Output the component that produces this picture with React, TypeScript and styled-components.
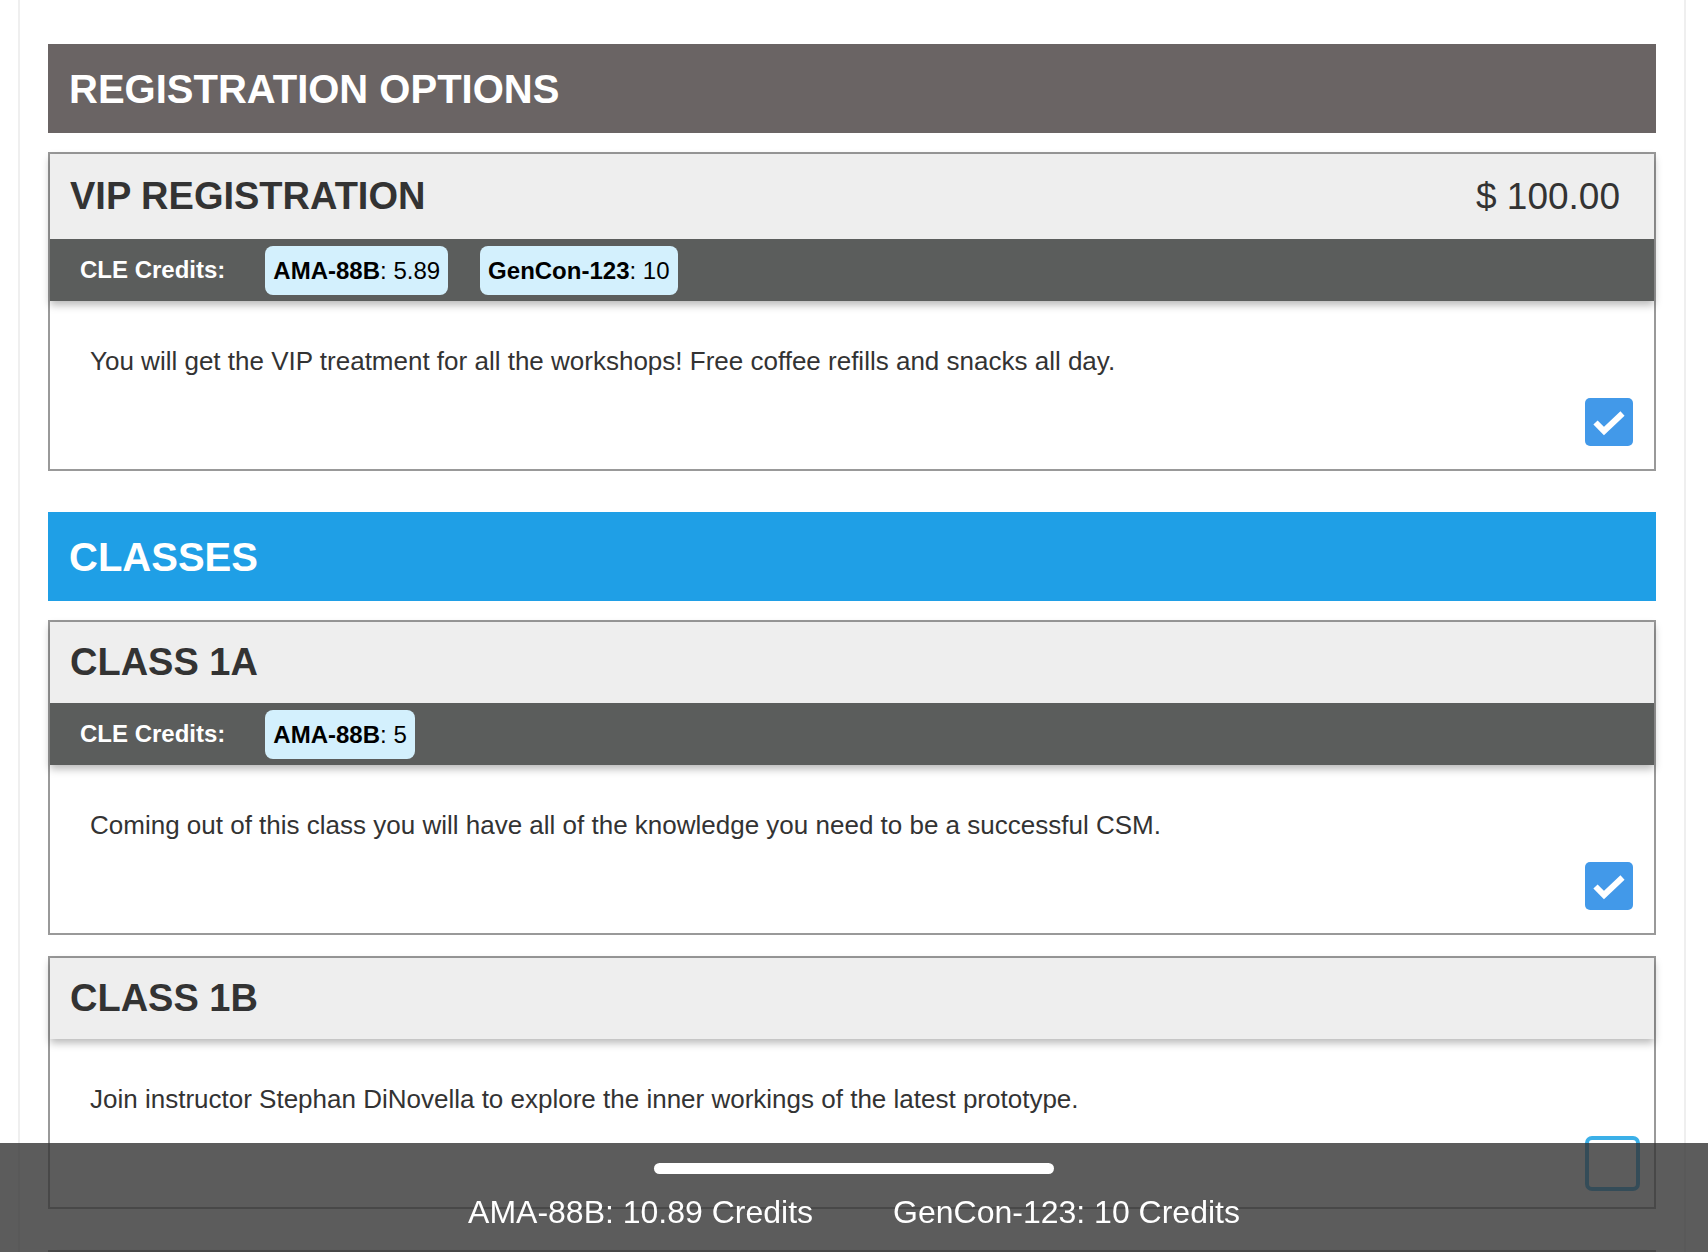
import React from "react";
import styled, { createGlobalStyle } from "styled-components";

const GlobalStyle = createGlobalStyle`
  html, body {
    margin: 0;
    padding: 0;
    background: #ffffff;
  }
  body {
    font-family: "Liberation Sans", Arial, Helvetica, sans-serif;
    color: #333333;
  }
  *, *::before, *::after {
    box-sizing: border-box;
  }
`;

const Page = styled.main`
  margin-left: 18px;
  width: 1668px;
  min-height: 1500px;
  border-left: 2px solid #efefef;
  border-right: 2px solid #efefef;
  padding: 44px 28px 200px;
`;

const Section = styled.section`
  & + & {
    margin-top: 41px;
  }
`;

const SectionHeader = styled.h2<{ $tone: "gray" | "blue" }>`
  margin: 0 0 19px;
  height: 89px;
  display: flex;
  align-items: center;
  padding: 0 21px;
  background: ${(p) => (p.$tone === "blue" ? "#1f9fe6" : "#6a6464")};
  color: #ffffff;
  font-size: 40px;
  font-weight: 700;
  line-height: 1;
`;

const Card = styled.article`
  border: 2px solid #999999;
  background: #ffffff;
  & + & {
    margin-top: 21px;
  }
`;

const CardTop = styled.div`
  position: relative;
  z-index: 1;
  box-shadow: 0 4px 8px rgba(0, 0, 0, 0.28);
`;

const CardHeader = styled.header`
  display: flex;
  align-items: center;
  justify-content: space-between;
  background: #eeeeee;
  padding: 18px 34px 18px 20px;
`;

const CardTitle = styled.h3`
  margin: 0;
  font-size: 38px;
  line-height: 45px;
  font-weight: 700;
  color: #333333;
`;

const Price = styled.span`
  font-size: 37px;
  line-height: 49px;
  color: #333333;
`;

const CreditsBar = styled.div`
  height: 62px;
  display: flex;
  align-items: center;
  gap: 32px;
  padding-left: 30px;
  background: #5b5d5c;
`;

const CreditsLabel = styled.span`
  color: #ffffff;
  font-size: 24px;
  font-weight: 700;
  margin-right: 8px;
`;

const Chip = styled.span`
  background: #d3f0fd;
  color: #000000;
  border-radius: 8px;
  padding: 8px 8px;
  font-size: 24px;
  line-height: 33px;
  white-space: nowrap;

  b {
    font-weight: 700;
  }
`;

const CardBody = styled.div`
  display: flex;
  flex-direction: column;
  padding: 42px 21px 23px 40px;
`;

const Description = styled.p`
  margin: 0;
  min-height: 36px;
  font-size: 26px;
  line-height: 36px;
  color: #333333;
`;

const CheckRow = styled.div`
  display: flex;
  justify-content: flex-end;
  margin-top: 19px;
`;

const CheckBox = styled.span<{ $checked: boolean }>`
  display: flex;
  align-items: center;
  justify-content: center;
  ${(p) =>
    p.$checked
      ? `
    width: 48px;
    height: 48px;
    border-radius: 5px;
    background: #4299e9;
  `
      : `
    width: 55px;
    height: 55px;
    margin-right: -7px;
    margin-bottom: -7px;
    border-radius: 7px;
    border: 4px solid #3bb0e8;
    background: #ffffff;
  `}
`;

const TotalsOverlay = styled.footer`
  position: fixed;
  left: 0;
  right: 0;
  bottom: 0;
  height: 109px;
  z-index: 10;
  display: flex;
  flex-direction: column;
  align-items: center;
  padding-top: 20px;
  background: rgba(51, 51, 51, 0.8);
`;

const Handle = styled.div`
  width: 400px;
  height: 11px;
  border-radius: 6px;
  background: #ffffff;
`;

const TotalsRow = styled.div`
  display: flex;
  gap: 80px;
  margin-top: 19px;
`;

const Total = styled.span`
  color: #ffffff;
  font-size: 32px;
  line-height: 1.2;
  white-space: nowrap;
`;

type Credit = { code: string; value: string };

type Option = {
  title: string;
  price?: string;
  credits: Credit[];
  description: string;
  checked: boolean;
};

const CheckMark = () => (
  <svg width="48" height="48" viewBox="0 0 48 48" aria-hidden="true">
    <polyline
      points="10.5,24.5 19,33 37.5,15.5"
      fill="none"
      stroke="#ffffff"
      strokeWidth="6"
      strokeLinejoin="miter"
    />
  </svg>
);

const OptionCard = ({ option }: { option: Option }) => (
  <Card>
    <CardTop>
      <CardHeader>
        <CardTitle>{option.title}</CardTitle>
        {option.price && <Price>{option.price}</Price>}
      </CardHeader>
      {option.credits.length > 0 && (
        <CreditsBar>
          <CreditsLabel>CLE Credits:</CreditsLabel>
          {option.credits.map((c) => (
            <Chip key={c.code}>
              <b>{c.code}</b>: {c.value}
            </Chip>
          ))}
        </CreditsBar>
      )}
    </CardTop>
    <CardBody>
      <Description>{option.description}</Description>
      <CheckRow>
        <CheckBox $checked={option.checked}>{option.checked && <CheckMark />}</CheckBox>
      </CheckRow>
    </CardBody>
  </Card>
);

const registration: Option[] = [
  {
    title: "VIP REGISTRATION",
    price: "$ 100.00",
    credits: [
      { code: "AMA-88B", value: "5.89" },
      { code: "GenCon-123", value: "10" },
    ],
    description:
      "You will get the VIP treatment for all the workshops! Free coffee refills and snacks all day.",
    checked: true,
  },
];

const classes: Option[] = [
  {
    title: "CLASS 1A",
    credits: [{ code: "AMA-88B", value: "5" }],
    description:
      "Coming out of this class you will have all of the knowledge you need to be a successful CSM.",
    checked: true,
  },
  {
    title: "CLASS 1B",
    credits: [],
    description:
      "Join instructor Stephan DiNovella to explore the inner workings of the latest prototype.",
    checked: false,
  },
];

const more: Option[] = [
  {
    title: "",
    credits: [],
    description: "",
    checked: false,
  },
];

export default function App() {
  return (
    <>
      <GlobalStyle />
      <Page>
        <Section>
          <SectionHeader $tone="gray">REGISTRATION OPTIONS</SectionHeader>
          {registration.map((o) => (
            <OptionCard key={o.title} option={o} />
          ))}
        </Section>
        <Section>
          <SectionHeader $tone="blue">CLASSES</SectionHeader>
          {classes.map((o) => (
            <OptionCard key={o.title} option={o} />
          ))}
        </Section>
        <Section>
          {more.map((o, i) => (
            <OptionCard key={i} option={o} />
          ))}
        </Section>
      </Page>
      <TotalsOverlay>
        <Handle />
        <TotalsRow>
          <Total>AMA-88B: 10.89 Credits</Total>
          <Total>GenCon-123: 10 Credits</Total>
        </TotalsRow>
      </TotalsOverlay>
    </>
  );
}
